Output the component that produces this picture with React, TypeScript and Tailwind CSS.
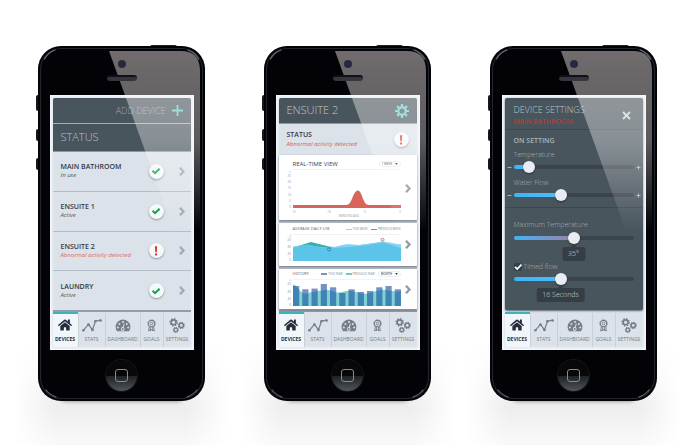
import React, { useId, useState } from "react";
import { FaHome } from "react-icons/fa";

/* ---------- icons ---------- */

function ChevronIcon({ className = "text-[#a0a7af]" }: { className?: string }) {
  return (
    <svg viewBox="0 0 6 9" className={`h-[9px] w-[6px] shrink-0 ${className}`} fill="none" stroke="currentColor" strokeWidth="2.3" aria-hidden="true">
      <path d="M1 .8l3.500 3.700L1 8.200" />
    </svg>
  );
}

function StatusBadge({ ok }: { ok: boolean }) {
  return (
    <span className="flex size-[15px] shrink-0 items-center justify-center rounded-full bg-[#f6f8fa] shadow-[0_1px_2px_rgba(40,50,60,0.45)]">
      <svg viewBox="0 0 10 10" className="size-[10px]" role="img" aria-label={ok ? "OK" : "Alert"}>
        {ok ? (
          <path d="M1.6 4.800l2.400 2.300L8.600 2.700" fill="none" stroke="#12a04a" strokeWidth="2" />
        ) : (
          <path d="M4 .3h2.1l-.3 6H4.3zM4.1 7.4h1.9v2H4.1z" fill="#e02b20" />
        )}
      </svg>
    </span>
  );
}

function StatsIcon() {
  return (
    <svg viewBox="0 0 20 13" className="h-[13px] w-[20px]" fill="currentColor" aria-hidden="true">
      <path d="M1.3 11.3L6.5 5.4l4 5.5 3-8.8 5.3-.9" fill="none" stroke="currentColor" strokeWidth="1.2" />
      <circle cx="1.4" cy="11.3" r="1.3" />
      <circle cx="6.4" cy="5.6" r="1.3" />
      <circle cx="10.4" cy="10.9" r="1.4" />
      <circle cx="13.4" cy="2.2" r="1.3" />
      <circle cx="18.6" cy="1.5" r="1.3" />
    </svg>
  );
}

function DashboardIcon() {
  return (
    <svg viewBox="0 0 16 13" className="h-[13px] w-[16px]" aria-hidden="true">
      <path d="M2 12.3A7.4 7.4 0 1 1 14 12.3Z" fill="currentColor" />
      <g fill="#dbe2e8">
        <circle cx="2.9" cy="8.6" r="1" />
        <circle cx="4.4" cy="4.9" r="1" />
        <circle cx="8" cy="3" r="1" />
        <circle cx="11.8" cy="4.9" r="1" />
        <circle cx="13.2" cy="8.6" r="1" />
        <circle cx="7.7" cy="10" r="1.9" />
      </g>
      <path d="M7.6 10.2L9.3 4.8" stroke="#dbe2e8" strokeWidth="1" />
      <circle cx="7.7" cy="10" r="1" fill="currentColor" />
    </svg>
  );
}

function GoalsIcon() {
  return (
    <svg viewBox="0 0 9 13" className="h-[13px] w-[9px]" fill="none" stroke="currentColor" aria-hidden="true">
      <circle cx="4.5" cy="4.6" r="3.2" strokeWidth="1.1" />
      <circle cx="4.5" cy="4.6" r="3.9" strokeWidth=".6" strokeDasharray="1.2 .84" />
      <circle cx="4.5" cy="4.6" r="1.3" strokeWidth=".9" />
      <path d="M2.3 7.6L1.7 12l1.4-.9M6.7 7.6l.6 4.4-1.4-.9M3.4 8.3v3.6L4.5 10l1.1 1.9V8.3" strokeWidth=".9" />
    </svg>
  );
}

function Gear({ cx, cy, r }: { cx: number; cy: number; r: number }) {
  const circumference = 2 * Math.PI * r;
  return (
    <g fill="none" stroke="currentColor">
      <circle cx={cx} cy={cy} r={r * 0.7} strokeWidth={r * 0.48} />
      <circle cx={cx} cy={cy} r={r} strokeWidth={r * 0.42} strokeDasharray={`${circumference / 16}`} />
    </g>
  );
}

function SettingsIcon() {
  return (
    <svg viewBox="0 0 16 15" className="h-[15px] w-[16px]" aria-hidden="true">
      <Gear cx={4.6} cy={4.3} r={3.5} />
      <Gear cx={12.3} cy={7.4} r={3} />
      <Gear cx={6.8} cy={11.9} r={2.5} />
    </svg>
  );
}

/* ---------- device frame ---------- */

function Phone({ children }: { children: React.ReactNode }) {
  const id = useId();
  return (
    <div className="relative w-[167px] shrink-0">
      <div className="absolute -inset-x-6 top-[295px] h-[110px] bg-linear-to-b from-transparent via-[#eeedee] via-60% to-[#fbfbfb] mask-x-from-80% mask-x-to-100%" />
      <div className="absolute inset-x-6 top-[350px] h-1 rounded-full shadow-[0_1px_4px_rgba(0,0,0,0.5)]" />
      <div className="absolute -top-px left-[112px] h-1 w-[27px] rounded-xs bg-[#1c2426]" />
      <div className="absolute top-[49px] -left-0.5 h-4 w-1 rounded-xs bg-[#14181c]" />
      <div className="absolute top-[83px] -left-0.5 h-3 w-1 rounded-xs bg-[#14181c]" />
      <div className="absolute top-[112px] -left-0.5 h-3 w-1 rounded-xs bg-[#14181c]" />

      <div className="relative flex flex-col items-center rounded-[23px] bg-[#020207]">
        <div className="relative z-10 flex h-[49px] flex-col items-center gap-2 pt-[15px]">
          <span className="size-1.5 rounded-full bg-[#26264a] ring-1 ring-[#2c2b33]" />
          <span className="h-[6px] w-[30px] rounded-full border-t-2 border-[#121016] bg-[#36343f]" />
        </div>
        <div className="h-[255px] w-[144px] bg-[#dbe2e9] p-[3px] font-['Open_Sans',sans-serif] shadow-[inset_0_0_3px_2px_#f5f9ff]">
          <div className="flex h-full flex-col">{children}</div>
        </div>
        <div className="flex h-[51px] items-center justify-center">
          <button aria-label="Home" className="flex size-[31px] items-center justify-center rounded-full bg-linear-to-b from-[#08080b] from-50% via-[#1f2226] via-52% to-[#50565a] ring-1 ring-[#15171b]">
            <span className="size-[13px] rounded-[3px] border border-[#8a8b8e]" />
          </button>
        </div>
      </div>

      <svg viewBox="0 0 167 355" className="pointer-events-none absolute inset-0 h-full w-full" aria-hidden="true">
        <defs>
          <linearGradient id={`${id}g`} x1="0" y1="0" x2="0" y2="1">
            <stop offset="0" stopColor="#fff2ee" stopOpacity=".44" />
            <stop offset=".5" stopColor="#fff" stopOpacity=".35" />
            <stop offset="1" stopColor="#fff" stopOpacity="0" />
          </linearGradient>
        </defs>
        <path d="M71 5H143Q162 5 162 25V185H136Z" fill={`url(#${id}g)`} />
        <rect x="2.5" y="2.5" width="162" height="350" rx="21" fill="none" stroke="#20262b" strokeWidth="1.2" />
        <g fill="none" stroke="#93a3b0" strokeLinecap="round" strokeWidth="1.2" opacity=".65">
          <path d="M6.5 13Q10 6.500 17 4" />
          <path d="M150 4Q157 6.500 160.500 13" />
          <path d="M8 344Q11.500 348.500 18 351" />
          <path d="M159 344Q155.500 348.500 149 351" />
        </g>
      </svg>
    </div>
  );
}

const tabs = [
  { name: "DEVICES", icon: <FaHome className="size-[14px]" /> },
  { name: "STATS", icon: <StatsIcon /> },
  { name: "DASHBOARD", icon: <DashboardIcon /> },
  { name: "GOALS", icon: <GoalsIcon /> },
  { name: "SETTINGS", icon: <SettingsIcon /> },
];

function TabBar() {
  return (
    <nav className="grid h-[35px] shrink-0 grid-cols-[25fr_27fr_35fr_23fr_28fr]">
      {tabs.map((tab, i) => (
        <button
          key={tab.name}
          aria-current={i === 0 ? "page" : undefined}
          className={
            i === 0
              ? "flex min-w-0 flex-col items-center border-t-2 border-[#3bb5ba] bg-[#f1f6fb] text-[#272c3c]"
              : "flex min-w-0 flex-col items-center border-t-2 border-l border-t-transparent border-l-[#c9d1d8] text-[#777c88]"
          }
        >
          <span className="flex h-[20px] items-center pt-0.5">{tab.icon}</span>
          <span className={i === 0 ? "text-[5px] leading-[10px] font-bold" : "text-[5px] leading-[10px]"}>{tab.name}</span>
        </button>
      ))}
    </nav>
  );
}

/* ---------- screen 1: device list ---------- */

const devices = [
  { name: "MAIN BATHROOM", state: "In use", ok: true },
  { name: "ENSUITE 1", state: "Active", ok: true },
  { name: "ENSUITE 2", state: "Abnormal activity detected", ok: false },
  { name: "LAUNDRY", state: "Active", ok: true },
];

function DeviceList() {
  return (
    <>
      <header className="rounded-t-xs bg-[#48555d] text-[#b9c1c6]">
        <div className="flex h-[26px] items-center justify-end border-b border-[#a3adb3] pr-2">
          <button className="flex items-center gap-1.5 text-[9px] leading-3 font-light text-[#98a1a7]">
            ADD DEVICE
            <svg viewBox="0 0 11 11" className="size-[11px]" stroke="#62ccca" strokeWidth="1.8" aria-hidden="true">
              <path d="M5.500 0v11M0 5.500h11" />
            </svg>
          </button>
        </div>
        <h1 className="flex h-[28px] items-center border-b border-[#6fa5a8] pl-2 text-[11px] font-light">STATUS</h1>
      </header>
      <ul className="flex flex-1 flex-col border-b-2 border-[#949ca5]">
        {devices.map((d) => (
          <li key={d.name} className="flex flex-1 border-b border-[#b4bdc6] last:border-b-0">
            <button className="flex flex-1 items-center pr-1.5 pl-2 text-left">
              <span className="flex flex-1 flex-col">
                <span className="text-[7px] leading-[9px] font-semibold text-[#333a4b]">{d.name}</span>
                <span className={d.ok ? "text-[6px] leading-[9px] text-[#4f5864] italic" : "text-[6px] leading-[9px] text-[#de6a65] italic"}>
                  {d.state}
                </span>
              </span>
              <StatusBadge ok={d.ok} />
              <span className="pl-[15px]">
                <ChevronIcon />
              </span>
            </button>
          </li>
        ))}
      </ul>
    </>
  );
}

/* ---------- screen 2: charts ---------- */

function PeriodSelect({ label, value }: { label: string; value: string }) {
  return (
    <span className="flex items-center gap-0.5 rounded-full border border-[#eceef0] px-0.5">
      <select aria-label={label} className="appearance-none text-[3px] leading-1 font-semibold text-[#555c66]">
        <option>{value}</option>
      </select>
      <svg viewBox="0 0 4 3" className="h-[2px] w-[3px]" fill="#333" aria-hidden="true">
        <path d="M0 0h4L2 3z" />
      </svg>
    </span>
  );
}

function Legend({ swatch, children }: { swatch: string; children: React.ReactNode }) {
  return (
    <span className="flex items-center gap-px text-[3px] leading-1 whitespace-nowrap text-[#7c8791]">
      <i className={`w-[6px] ${swatch}`} />
      {children}
    </span>
  );
}

interface ChartCardProps {
  title: string;
  titleClass: string;
  padding: string;
  tools: React.ReactNode;
  children: React.ReactNode;
}

function ChartCard({ title, titleClass, padding, tools, children }: ChartCardProps) {
  return (
    <section className={`flex items-center bg-white pr-1.5 pl-2 shadow-[0_1px_2px_rgba(60,70,85,0.6)] ${padding}`}>
      <div className="flex min-w-0 flex-1 flex-col">
        <div className="ml-[6px] flex h-[10px] items-center justify-between">
          <h3 className={titleClass}>{title}</h3>
          <div className="flex items-center gap-[3px]">{tools}</div>
        </div>
        {children}
      </div>
      <button aria-label={`Open ${title}`} className="pl-1">
        <ChevronIcon className="text-[#8f9aa2]" />
      </button>
    </section>
  );
}

function Scale({ marks }: { marks: [string, number][] }) {
  return (
    <g fill="#8d959d" fontSize="3" textAnchor="end">
      {marks.map(([label, y]) => (
        <text key={y} x="4" y={y}>
          {label}
        </text>
      ))}
    </g>
  );
}

function RealTimeChart() {
  return (
    <svg viewBox="0 0 114 48" className="w-full" role="img" aria-label="Real-time use, minutes ago">
      <path d="M6 .500H114" stroke="#dfe2e5" strokeWidth=".5" />
      <Scale marks={[["L", 3.5], ["25", 8], ["20", 14], ["15", 20], ["10", 27], ["5", 33], ["0", 39]]} />
      <path d="M6 36H59C63 36 64.500 31 66.500 26C69.500 20 72.500 20 74.500 26C76.500 31 78 36 82 36H114V39H6Z" fill="#d96459" />
      <g fill="#8d959d" fontSize="3" textAnchor="middle">
        <text x="7" y="44">15</text>
        <text x="42" y="44">10</text>
        <text x="78" y="44">5</text>
        <text x="113" y="44">0</text>
        <text x="62" y="47.500">MINUTES AGO</text>
      </g>
    </svg>
  );
}

function DailyChart() {
  return (
    <svg viewBox="0 0 114 30" className="w-full" role="img" aria-label="Average daily use">
      <path d="M6 .500H114" stroke="#e4e7ea" strokeWidth=".5" />
      <Scale marks={[["L", 3], ["120", 7], ["80", 14], ["40", 21], ["0", 27]]} />
      <path d="M6 13.500L24 8L42 12.500L52 13.500L78 10.500L96 8L114 14V27H6Z" fill="#36b0ac" />
      <path d="M6 12.500L18 11L42 14L60 10L72 11L96 7.500L114 10.500V27H6Z" fill="#86d4f2" />
      <path d="M6 13.500L21 10.500L34 13.500L48 14L78 11.500L96 8.500L114 14V27H6Z" fill="#5cc4e8" />
      <circle cx="42" cy="15.500" r="1.500" fill="#7cc4ec" stroke="#2a78c0" strokeWidth=".9" />
      <circle cx="95.500" cy="5.800" r="1.500" fill="#fff" stroke="#d8635c" strokeWidth=".9" />
    </svg>
  );
}

const barTops = [7, 10.3, 9.6, 5, 8.3, 14, 10.3, 13, 12, 8.3, 7, 10.3];
const previousYear =
  "M6 5.500C10 5.500 11 11 16 14C20 16 24 12 30 12C38 11 42 10 48 13C54 15 58 11 64 12C72 13 76 16 82 14C90 12 94 10 100 11C106 12 109 13 114 12V27H6Z";

function HistoryChart() {
  const id = useId();
  const bars = (fill: string) => barTops.map((y, i) => <rect key={i} x={6 + i * 9.25} y={y} width="6.200" height={27 - y} fill={fill} />);
  return (
    <svg viewBox="0 0 114 30" className="w-full" role="img" aria-label="History">
      <clipPath id={id}>
        <path d={previousYear} />
      </clipPath>
      <path d="M6 .500H114" stroke="#e4e7ea" strokeWidth=".5" />
      <Scale marks={[["L", 2], ["120", 6], ["80", 14], ["40", 21], ["0", 27]]} />
      {bars("#7490c4")}
      <path d={previousYear} fill="#7fd1d2" />
      <g clipPath={`url(#${id})`}>{bars("#4283b5")}</g>
    </svg>
  );
}

function DeviceDetail() {
  return (
    <>
      <header className="flex h-[26px] items-center justify-between rounded-t-xs border-b border-[#6fa5a8] bg-[#48555d] pr-2 pl-2">
        <h1 className="text-[11px] font-light text-[#c3cace]">ENSUITE 2</h1>
        <button aria-label="Device settings" className="text-[#67cfcf]">
          <svg viewBox="0 0 14 14" className="size-[14px]" fill="none" stroke="currentColor" aria-hidden="true">
            <circle cx="7" cy="7" r="3.700" strokeWidth="2.200" />
            <path d="M7 0v3M7 11v3M0 7h3M11 7h3M2.100 2.100l2 2M9.900 9.900l2 2M2.100 11.900l2-2M9.900 4.100l2-2" strokeWidth="2.200" />
          </svg>
        </button>
      </header>
      <div className="flex h-[31px] shrink-0 items-center justify-between pr-2 pl-2">
        <div className="flex flex-col">
          <h2 className="text-[7px] leading-[9px] font-semibold text-[#333a4b]">STATUS</h2>
          <p className="text-[6px] leading-[10px] text-[#de5a55] italic">Abnormal activity detected</p>
        </div>
        <StatusBadge ok={false} />
      </div>
      <div className="flex flex-1 flex-col gap-[3px] border-b-2 border-[#949ca5] bg-[#bcc3ca]">
        <ChartCard
          title="REAL-TIME VIEW"
          titleClass="text-[6px] leading-2 font-medium whitespace-nowrap text-[#3c4353]"
          padding="pt-1 pb-[3px]"
          tools={<PeriodSelect label="Real-time period" value="1 WEEK" />}
        >
          <RealTimeChart />
        </ChartCard>
        <ChartCard
          title="AVERAGE DAILY USE"
          titleClass="text-[4px] leading-1 whitespace-nowrap text-[#5c6570]"
          padding="pt-px pb-0.5"
          tools={
            <>
              <Legend swatch="border-t border-[#86d4f2]">THIS WEEK</Legend>
              <Legend swatch="border-t border-[#36b0ac]">PREVIOUS WEEK</Legend>
            </>
          }
        >
          <DailyChart />
        </ChartCard>
        <ChartCard
          title="HISTORY"
          titleClass="text-[4px] leading-1 whitespace-nowrap text-[#5c6570]"
          padding=""
          tools={
            <>
              <Legend swatch="border-t-2 border-[#7490c4]">THIS YEAR</Legend>
              <Legend swatch="border-t-2 border-[#6ccaca]">PREVIOUS YEAR</Legend>
              <PeriodSelect label="History period" value="MONTH" />
            </>
          }
        >
          <HistoryChart />
        </ChartCard>
      </div>
    </>
  );
}

/* ---------- screen 3: settings ---------- */

function Slider({ id, start, warm = false }: { id: string; start: number; warm?: boolean }) {
  const [value, setValue] = useState(start);
  const stop = `calc(6px + (100% - 12px) * ${value / 100})`;
  const tint = warm ? "#a07fa8" : "#4dbcfb";
  const style = {
    "--track": `linear-gradient(to right, #3fb4f6, ${tint} ${stop}, #3b444b ${stop})`,
  } as React.CSSProperties;
  return (
    <input
      id={id}
      type="range"
      value={value}
      onChange={(e) => setValue(Number(e.target.value))}
      style={style}
      className="block h-3 w-full appearance-none bg-transparent [&::-webkit-slider-runnable-track]:h-1 [&::-webkit-slider-runnable-track]:rounded-xs [&::-webkit-slider-runnable-track]:[background:var(--track)] [&::-webkit-slider-thumb]:-mt-1 [&::-webkit-slider-thumb]:size-3 [&::-webkit-slider-thumb]:appearance-none [&::-webkit-slider-thumb]:rounded-full [&::-webkit-slider-thumb]:bg-[#e8edf4] [&::-webkit-slider-thumb]:shadow-[0_1px_2px_rgba(0,0,0,0.4)]"
    />
  );
}

function StepSlider({ id, start, warm }: { id: string; start: number; warm?: boolean }) {
  return (
    <div className="-mx-[7px] flex items-center gap-0.5 text-[#b5bdc3]">
      <svg viewBox="0 0 5 5" className="size-[5px] shrink-0" stroke="currentColor" strokeWidth=".9" aria-hidden="true">
        <path d="M.500 2.500h4" />
      </svg>
      <Slider id={id} start={start} warm={warm} />
      <svg viewBox="0 0 5 5" className="size-[5px] shrink-0" stroke="currentColor" strokeWidth=".9" aria-hidden="true">
        <path d="M.500 2.500h4M2.500 .500v4" />
      </svg>
    </div>
  );
}

function Bubble({ at, children }: { at: number; children: React.ReactNode }) {
  return (
    <div className="flex">
      <output
        style={{ marginLeft: `calc(6px + (100% - 12px) * ${at / 100})` }}
        className="relative mt-[3px] -translate-x-1/2 rounded-xs bg-[#363e45] px-[6px] text-[7px] leading-[14px] font-light whitespace-nowrap text-[#d3d9dd]"
      >
        <span className="absolute -top-0.5 left-1/2 size-1 -translate-x-1/2 rotate-45 bg-[#363e45]" />
        {children}
      </output>
    </div>
  );
}

const labelClass = "text-[7px] leading-[10px] font-light text-[#a5aeb4]";

function DeviceSettings() {
  return (
    <div className="mb-[2px] flex flex-1 flex-col rounded-xs bg-[#48555d] shadow-[0_1px_2px_rgba(40,50,60,0.7)]">
      <header className="flex h-[32px] items-center justify-between border-b border-[#3c474e] pt-[3px] pr-3 pl-[9px]">
        <div>
          <h1 className="text-[9px] leading-[12px] font-light text-[#bcc4c9]">DEVICE SETTINGS</h1>
          <p className="text-[7px] leading-[11px] text-[#d0352b]">MAIN BATHROOM</p>
        </div>
        <button aria-label="Close" className="text-[#ccd2d6]">
          <svg viewBox="0 0 9 9" className="size-[9px]" stroke="currentColor" strokeWidth="1.900" aria-hidden="true">
            <path d="M1 1l7 7M8 1L1 8" />
          </svg>
        </button>
      </header>
      <section className="h-[78px] border-b border-[#3c474e] px-[9px] pt-[6px]">
        <h2 className="text-[7px] leading-[10px] font-semibold text-[#a9b2b8]">ON SETTING</h2>
        <label htmlFor="temperature" className={`${labelClass} mt-1 block`}>Temperature</label>
        <div className="mt-px"><StepSlider id="temperature" start={9} /></div>
        <label htmlFor="water-flow" className={`${labelClass} mt-[5px] block`}>Water Flow</label>
        <div className="mt-px"><StepSlider id="water-flow" start={38} /></div>
      </section>
      <section className="px-[9px] pt-[12px]">
        <label htmlFor="max-temperature" className={`${labelClass} block`}>Maximum Temperature</label>
        <div className="mt-[2px]"><Slider id="max-temperature" start={50} warm /></div>
        <Bubble at={50}>35°</Bubble>
        <label className={`${labelClass} relative mt-px flex items-center gap-0.5`}>
          <input type="checkbox" defaultChecked className="peer sr-only" />
          <span className="flex size-2 items-center justify-center rounded-xs bg-[#363e45] peer-checked:*:visible *:invisible">
            <svg viewBox="0 0 8 8" className="size-2" fill="none" stroke="#fff" strokeWidth="1.800" aria-hidden="true">
              <path d="M1 3.800l2.200 2.200L7.500 1.500" />
            </svg>
          </span>
          Timed flow
        </label>
        <div className="mt-px"><Slider id="timed-flow" start={38} /></div>
        <Bubble at={38}>16 Seconds</Bubble>
      </section>
    </div>
  );
}

export default function App() {
  return (
    <main className="flex min-h-screen items-start justify-center gap-[59px] overflow-hidden bg-white pt-[46px] pr-[5px]">
      <Phone>
        <DeviceList />
        <TabBar />
      </Phone>
      <Phone>
        <DeviceDetail />
        <TabBar />
      </Phone>
      <Phone>
        <DeviceSettings />
        <TabBar />
      </Phone>
    </main>
  );
}
